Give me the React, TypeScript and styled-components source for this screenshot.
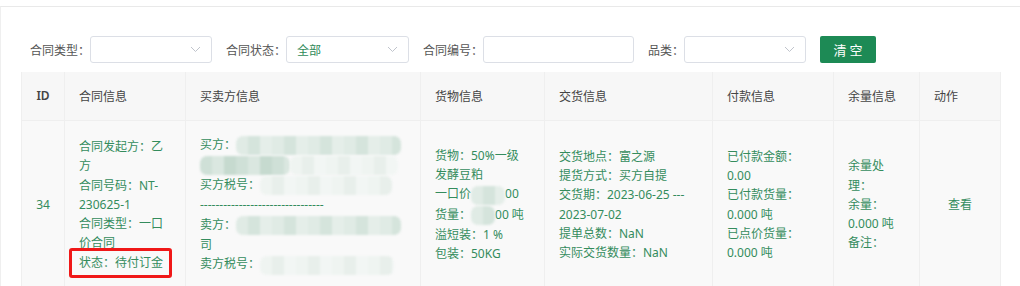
import styled, { createGlobalStyle } from "styled-components";

const GlobalStyle = createGlobalStyle`
	body {
		margin: 0;
		background: #fff;
		font-family: "Noto Sans", "Noto Sans CJK SC", sans-serif;
		font-size: 12px;
	}
`;

const Page = styled.div`
	padding-top: 6px;
	width: 1020px;
	height: 280px;
	overflow: hidden;
`;

const Card = styled.div`
	border-top: 1px solid #e9e9e9;
	border-left: 1px solid #efefef;
	padding: 29px 0 0 20px;
	height: 100%;
`;

const Filters = styled.div`
	display: flex;
	align-items: center;
	height: 27px;
	padding-left: 9px;
	margin-bottom: 9px;
`;

const Field = styled.div`
	display: flex;
	align-items: center;
	margin-right: 14px;
`;

const Label = styled.span`
	color: #555;
	font-size: 12px;
	white-space: nowrap;
`;

const Box = styled.div<{ $w: number }>`
	box-sizing: border-box;
	width: ${(p) => p.$w}px;
	height: 27px;
	border: 1px solid #dcdfe6;
	border-radius: 3px;
	background: #fff;
	display: flex;
	align-items: center;
	justify-content: space-between;
	padding: 0 10px 0 10px;
	color: #2f8a59;
`;

const Chevron = () => (
	<svg width="11" height="7" viewBox="0 0 11 7">
		<path d="M1 1l4.5 4.5L10 1" fill="none" stroke="#c0c4cc" strokeWidth="1" />
	</svg>
);

const ClearButton = styled.button`
	width: 56px;
	height: 27px;
	border: none;
	border-radius: 2px;
	background: #1d8a55;
	color: #fff;
	font-family: inherit;
	font-size: 13px;
	letter-spacing: 3px;
	padding: 0 0 0 3px;
`;

const Table = styled.table`
	border-collapse: collapse;
	table-layout: fixed;
	width: 979px;
`;

const Th = styled.th<{ $center?: boolean }>`
	height: 48px;
	box-sizing: border-box;
	background: #f7f7f7;
	color: #444;
	font-weight: ${(p) => (p.$center ? 600 : "normal")};
	text-align: ${(p) => (p.$center ? "center" : "left")};
	padding: ${(p) => (p.$center ? "0 4px" : "0 14px 0 14px")};
	border: 1px solid #efefef;
	border-top: none;
`;

const Td = styled.td<{ $center?: boolean }>`
	background: #f9f9f9;
	color: #348c5d;
	line-height: 19.3px;
	vertical-align: middle;
	text-align: ${(p) => (p.$center ? "center" : "left")};
	padding: ${(p) => (p.$center ? "14px 4px" : "14px 14px 14px 14px")};
	border: 1px solid #efefef;
`;

const Line = styled.div`
	white-space: normal;
`;

const Flag = styled.span`
	position: relative;
	display: inline-block;
	&::after {
		content: "";
		position: absolute;
		left: -10px;
		right: -9px;
		top: -5px;
		bottom: -6px;
		border: 3px solid #f01818;
		border-radius: 3px;
	}
`;

const Mosaic = styled.span<{ $w: number; $tone?: "dark" | "light" }>`
	display: inline-block;
	vertical-align: middle;
	width: ${(p) => p.$w}px;
	height: 19px;
	border-radius: 7px;
	filter: blur(0.8px);
	background: ${(p) =>
		p.$tone === "dark"
			? "repeating-linear-gradient(90deg, #cfe0d7 0 12px, #dae7e0 12px 24px, #c6dacf 24px 36px)"
			: p.$tone === "light"
			? "repeating-linear-gradient(90deg, #eff4f1 0 12px, #e8efeb 12px 24px, #f2f6f4 24px 36px)"
			: "repeating-linear-gradient(90deg, #e0ebe5 0 12px, #d5e4dc 12px 24px, #e5eee9 24px 36px)"};
`;

const ViewLink = styled.a`
	color: #348c5d;
	text-decoration: none;
`;

const columns = [43, 121, 235, 124, 168, 121, 86, 81];

export default function App() {
	return (
		<Page>
			<GlobalStyle />
			<Card>
				<Filters>
					<Field>
						<Label>合同类型：</Label>
						<Box $w={122}>
							<span />
							<Chevron />
						</Box>
					</Field>
					<Field>
						<Label>合同状态：</Label>
						<Box $w={123}>
							<span>全部</span>
							<Chevron />
						</Box>
					</Field>
					<Field>
						<Label>合同编号：</Label>
						<Box $w={151} />
					</Field>
					<Field>
						<Label>品类：</Label>
						<Box $w={122}>
							<span />
							<Chevron />
						</Box>
					</Field>
					<ClearButton>清空</ClearButton>
				</Filters>

				<Table>
					<colgroup>
						{columns.map((w, i) => (
							<col key={i} style={{ width: w }} />
						))}
					</colgroup>
					<thead>
						<tr>
							<Th $center>ID</Th>
							<Th>合同信息</Th>
							<Th>买卖方信息</Th>
							<Th>货物信息</Th>
							<Th>交货信息</Th>
							<Th>付款信息</Th>
							<Th>余量信息</Th>
							<Th>动作</Th>
						</tr>
					</thead>
					<tbody>
						<tr>
							<Td $center>34</Td>
							<Td>
								<Line>合同发起方：乙方</Line>
								<Line>合同号码：NT-230625-1</Line>
								<Line>合同类型：一口价合同</Line>
								<Line>
									<Flag>状态：待付订金</Flag>
								</Line>
							</Td>
							<Td>
								<Line>
									买方：<Mosaic $w={165} />
								</Line>
								<Line>
									<Mosaic $w={90} $tone="dark" />
									<Mosaic $w={108} $tone="light" />
								</Line>
								<Line>
									买方税号：<Mosaic $w={132} $tone="light" />
								</Line>
								<Line>--------------------------------</Line>
								<Line>
									卖方：<Mosaic $w={165} />
								</Line>
								<Line>司</Line>
								<Line>
									卖方税号：<Mosaic $w={134} $tone="light" />
								</Line>
							</Td>
							<Td>
								<Line>货物：50%一级发酵豆粕</Line>
								<Line>
									一口价<Mosaic $w={34} />00
								</Line>
								<Line>
									货量：<Mosaic $w={24} />00 吨
								</Line>
								<Line>溢短装：1 %</Line>
								<Line>包装：50KG</Line>
							</Td>
							<Td>
								<Line>交货地点：富之源</Line>
								<Line>提货方式：买方自提</Line>
								<Line>交货期：2023-06-25 --- 2023-07-02</Line>
								<Line>提单总数：NaN</Line>
								<Line>实际交货数量：NaN</Line>
							</Td>
							<Td>
								<Line>已付款金额：0.00</Line>
								<Line>已付款货量：0.000 吨</Line>
								<Line>已点价货量：0.000 吨</Line>
							</Td>
							<Td>
								<Line>余量处理：</Line>
								<Line>余量：0.000 吨</Line>
								<Line>备注：</Line>
							</Td>
							<Td $center>
								<ViewLink href="#">查看</ViewLink>
							</Td>
						</tr>
					</tbody>
				</Table>
			</Card>
		</Page>
	);
}
